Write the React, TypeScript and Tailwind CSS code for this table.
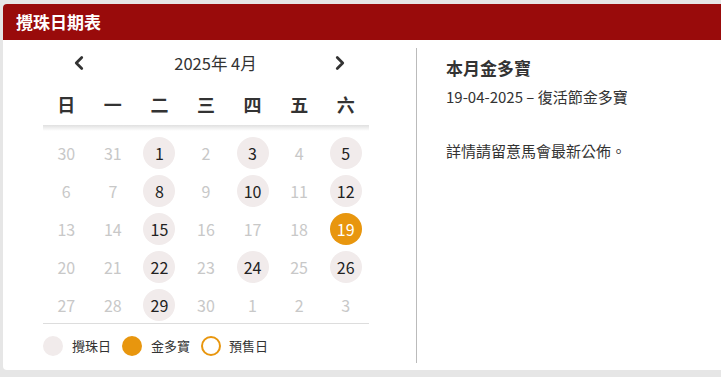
import React from 'react'
import { ChevronLeft, ChevronRight } from 'lucide-react'

type Day = { n: number; cur: boolean; kind?: 'draw' | 'jackpot' }

const weekdays = ['日', '一', '二', '三', '四', '五', '六']

const drawDays = [1, 3, 5, 8, 10, 12, 15, 22, 24, 26, 29]

function buildDays(): Day[] {
    const days: Day[] = [{ n: 30, cur: false }, { n: 31, cur: false }]
    for (let i = 1; i <= 30; i++) {
        if (i === 19) days.push({ n: i, cur: true, kind: 'jackpot' })
        else if (drawDays.includes(i)) days.push({ n: i, cur: true, kind: 'draw' })
        else days.push({ n: i, cur: true })
    }
    for (let i = 1; i <= 3; i++) days.push({ n: i, cur: false })
    return days
}

export default function App() {
    const days = buildDays()

    return (
        <div
            className="w-[721px] h-[377px] overflow-hidden bg-[#e6e6e6] pt-[4px] pl-[3px]"
            style={{ fontFamily: '"Noto Sans CJK TC", "Noto Sans", sans-serif' }}
        >
            <div className="w-[760px] h-[366px] bg-white rounded-[4px]">
                {/* header */}
                <div className="h-[36px] bg-[#990b0b] rounded-t-[4px] pl-[13px] flex items-center text-white font-bold text-[17px]">
                    攪珠日期表
                </div>

                <div className="flex pt-[8px]">
                    {/* calendar */}
                    <div className="w-[414px] h-[315px] border-r border-[#bbbbbb] pl-[40px]">
                        <div className="w-[326px]">
                            <div className="h-[30px] flex items-center pl-[31px] pr-[24px] text-[#333]">
                                <ChevronLeft size={22} strokeWidth={3} className="-mx-[6px]" />
                                <div className="flex-1 text-center pl-[12px] text-[16.5px]">2025年 4月</div>
                                <ChevronRight size={22} strokeWidth={3} className="-mx-[6px]" />
                            </div>
                            <div className="h-[47px] pt-[6px] grid grid-cols-7 items-center text-[18px] font-bold text-[#333]">
                                {weekdays.map((w) => (
                                    <div key={w} className="text-center">{w}</div>
                                ))}
                            </div>
                            <div className="h-[6px] bg-gradient-to-b from-[#e0e0e0] to-white" />
                            <div className="grid grid-cols-7 gap-y-[6px] pt-[6px]">
                                {days.map((d, i) => (
                                    <div key={i} className="flex justify-center">
                                        {d.kind === 'jackpot' ? (
                                            <div className="w-[32px] h-[32px] rounded-full bg-[#e8960e] text-white flex items-center justify-center text-[16px]">
                                                {d.n}
                                            </div>
                                        ) : d.kind === 'draw' ? (
                                            <div className="w-[32px] h-[32px] rounded-full bg-[#f1ebeb] text-[#222] flex items-center justify-center text-[16px]">
                                                {d.n}
                                            </div>
                                        ) : (
                                            <div className="w-[32px] h-[32px] text-[#c8c8c8] flex items-center justify-center text-[16px]">
                                                {d.n}
                                            </div>
                                        )}
                                    </div>
                                ))}
                            </div>
                            <div className="mt-[2px] border-t border-[#dddddd]" />
                            <div className="pt-[12px] flex items-center text-[13px] text-[#333]">
                                <span className="w-[20px] h-[20px] rounded-full bg-[#f1ebeb]" />
                                <span className="ml-[9px]">攪珠日</span>
                                <span className="ml-[11px] w-[20px] h-[20px] rounded-full bg-[#e8960e]" />
                                <span className="ml-[9px]">金多寶</span>
                                <span className="ml-[11px] w-[20px] h-[20px] rounded-full border-2 border-[#e8960e]" />
                                <span className="ml-[8px]">預售日</span>
                            </div>
                        </div>
                    </div>

                    {/* this month */}
                    <div className="pl-[29px] pt-[8px] text-[#333]">
                        <h3 className="text-[17px] font-bold leading-[24px]">本月金多寶</h3>
                        <p className="mt-[5px] text-[15px] leading-[24px]">19-04-2025 – 復活節金多寶</p>
                        <p className="mt-[30px] text-[15px] leading-[24px]">詳情請留意馬會最新公佈。</p>
                    </div>
                </div>
            </div>
        </div>
    )
}
